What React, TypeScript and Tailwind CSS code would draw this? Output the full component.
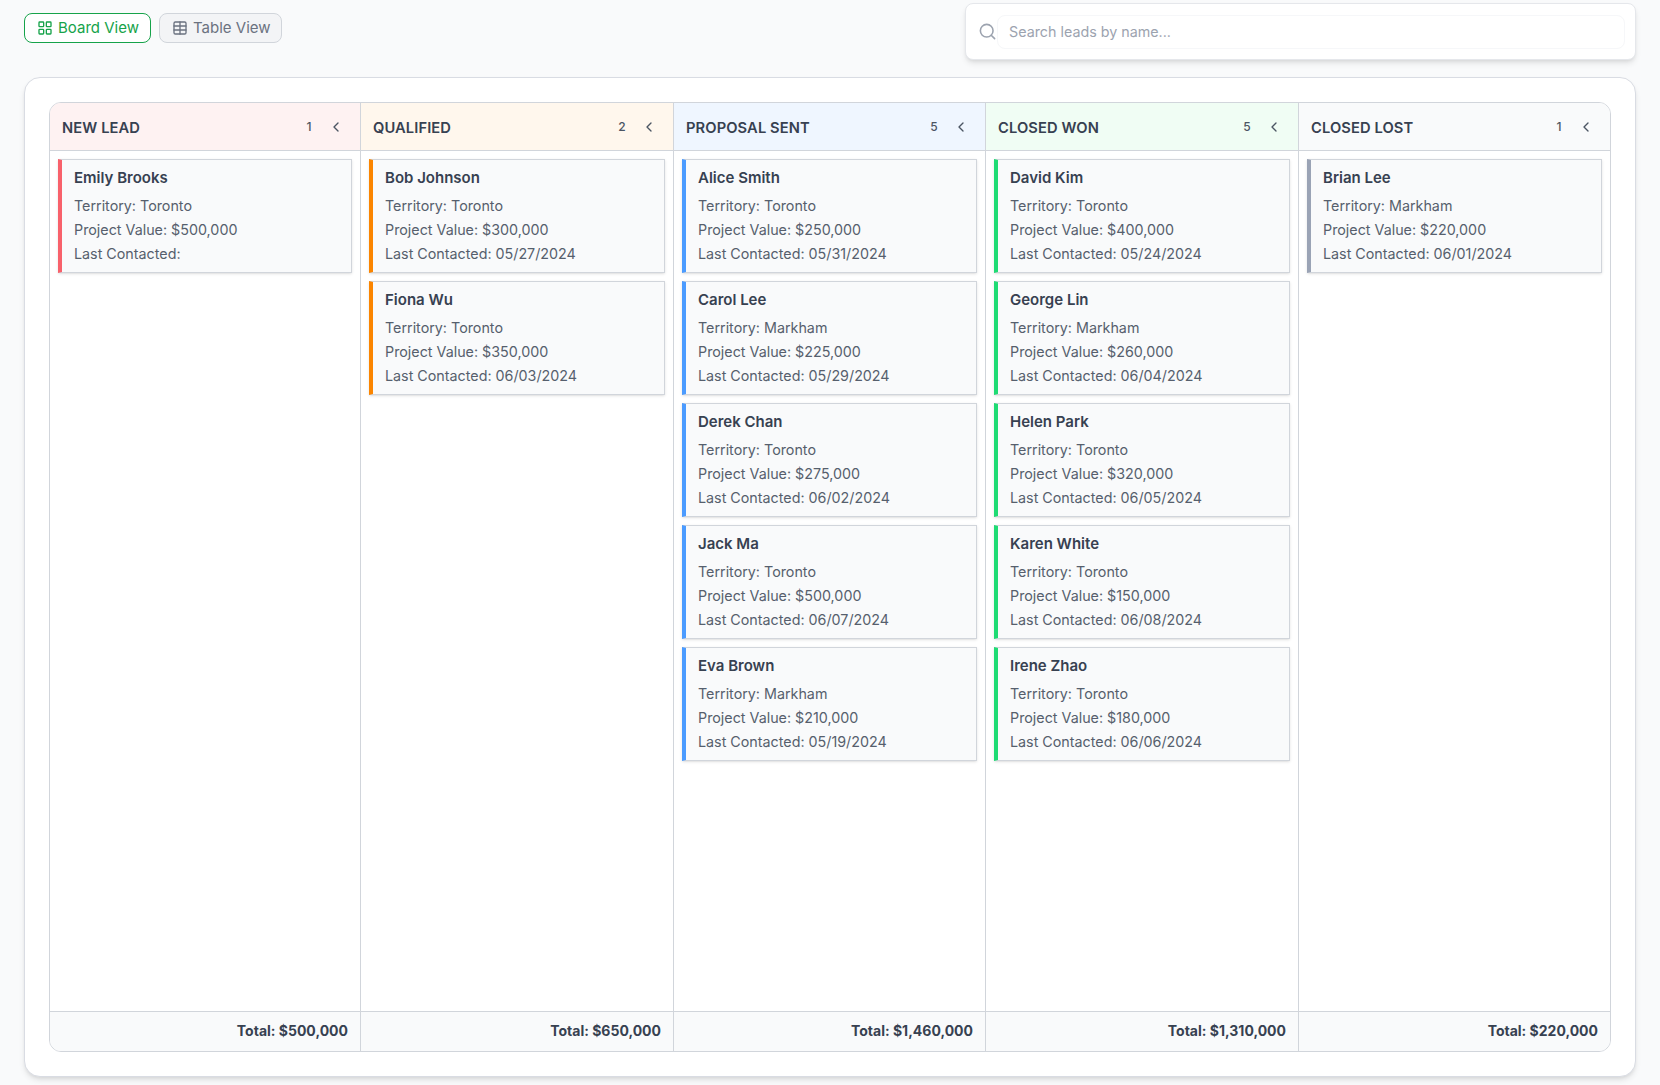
import { ChevronLeft, LayoutGrid, Search, Table } from "lucide-react";

type Lead = { name: string; territory: string; value: string; contacted: string };

const columns: {
  title: string;
  total: string;
  head: string;
  accent: string;
  leads: Lead[];
}[] = [
  {
    title: "New Lead",
    total: "$500,000",
    head: "bg-[#fef2f2]",
    accent: "border-l-[#f8616b]",
    leads: [{ name: "Emily Brooks", territory: "Toronto", value: "$500,000", contacted: "" }],
  },
  {
    title: "Qualified",
    total: "$650,000",
    head: "bg-[#fff7ed]",
    accent: "border-l-[#fb8500]",
    leads: [
      { name: "Bob Johnson", territory: "Toronto", value: "$300,000", contacted: "05/27/2024" },
      { name: "Fiona Wu", territory: "Toronto", value: "$350,000", contacted: "06/03/2024" },
    ],
  },
  {
    title: "Proposal Sent",
    total: "$1,460,000",
    head: "bg-[#eff6ff]",
    accent: "border-l-[#4b9bff]",
    leads: [
      { name: "Alice Smith", territory: "Toronto", value: "$250,000", contacted: "05/31/2024" },
      { name: "Carol Lee", territory: "Markham", value: "$225,000", contacted: "05/29/2024" },
      { name: "Derek Chan", territory: "Toronto", value: "$275,000", contacted: "06/02/2024" },
      { name: "Jack Ma", territory: "Toronto", value: "$500,000", contacted: "06/07/2024" },
      { name: "Eva Brown", territory: "Markham", value: "$210,000", contacted: "05/19/2024" },
    ],
  },
  {
    title: "Closed Won",
    total: "$1,310,000",
    head: "bg-[#f0fdf4]",
    accent: "border-l-[#1fdc74]",
    leads: [
      { name: "David Kim", territory: "Toronto", value: "$400,000", contacted: "05/24/2024" },
      { name: "George Lin", territory: "Markham", value: "$260,000", contacted: "06/04/2024" },
      { name: "Helen Park", territory: "Toronto", value: "$320,000", contacted: "06/05/2024" },
      { name: "Karen White", territory: "Toronto", value: "$150,000", contacted: "06/08/2024" },
      { name: "Irene Zhao", territory: "Toronto", value: "$180,000", contacted: "06/06/2024" },
    ],
  },
  {
    title: "Closed Lost",
    total: "$220,000",
    head: "bg-[#f9fafb]",
    accent: "border-l-[#9aa3b5]",
    leads: [{ name: "Brian Lee", territory: "Markham", value: "$220,000", contacted: "06/01/2024" }],
  },
];

function LeadCard({ lead, accent }: { lead: Lead; accent: string }) {
  return (
    <div className={`h-[114px] border border-l-4 border-[#d1d5db] bg-[#f9fafb] pl-3 pt-2 shadow-sm ${accent}`}>
      <p className="h-5 text-[15px] leading-5 font-semibold text-[#374151]">{lead.name}</p>
      <div className="mt-1.5 text-[14.3px] leading-6 text-[#565f6d]">
        <p>Territory: {lead.territory}</p>
        <p>Project Value: {lead.value}</p>
        <p>Last Contacted: {lead.contacted}</p>
      </div>
    </div>
  );
}

export default function App() {
  return (
    <div className="min-h-screen bg-[#f9fafb] px-6 pt-[3px] font-['Inter',sans-serif]">
      <div className="flex items-start justify-between">
        <div className="mt-[10px] flex gap-2">
          <button
            type="button"
            className="flex h-[30px] w-[127px] items-center gap-[5px] rounded-lg border border-[#16a34a] bg-white pl-3 text-[15px] text-[#16a34a]"
          >
            <LayoutGrid size={16} />
            Board View
          </button>
          <button
            type="button"
            className="flex h-[30px] w-[123px] items-center gap-[5px] rounded-lg border border-[#d1d5db] bg-[#f3f4f6] pl-3 text-[15px] text-[#6b7280]"
          >
            <Table size={16} />
            Table View
          </button>
        </div>
        <div className="flex h-[57px] w-[671px] items-center rounded-lg border border-[#e5e7eb] bg-white pl-3 pr-2.5 shadow-md">
          <Search size={19} className="shrink-0 text-[#9ca3af]" />
          <div className="flex h-[34px] flex-1 items-center rounded-lg border border-[#f6f7f9] bg-white px-[11px] text-[14.3px] text-[#9ca3af]">
            Search leads by name...
          </div>
        </div>
      </div>
      <div className="mt-[17px] h-[1000px] rounded-2xl border border-[#d9dce3] bg-white p-6 shadow-md">
        <div className="grid h-[950px] grid-cols-[311px_313px_312px_313px_1fr] overflow-hidden rounded-xl border border-[#d1d5db]">
          {columns.map((col) => (
            <div key={col.title} className="flex flex-col border-r border-[#d1d5db] last:border-r-0">
              <div className={`flex h-12 shrink-0 items-center border-b border-[#d1d5db] pl-3 ${col.head}`}>
                <span className="flex-1 pt-0.5 text-[14.7px] leading-5 font-semibold tracking-[0.1px] text-[#374151] uppercase">
                  {col.title}
                </span>
                <span className="w-4 text-center text-xs font-medium text-[#4b5563]">{col.leads.length}</span>
                <ChevronLeft size={16} className="mr-4 ml-[11px] text-[#4b5563]" />
              </div>
              <div className="flex flex-1 flex-col gap-2 p-2">
                {col.leads.map((lead) => (
                  <LeadCard key={lead.name} lead={lead} accent={col.accent} />
                ))}
              </div>
              <div className="flex h-10 shrink-0 items-center justify-end border-t border-[#d1d5db] bg-[#f9fafb] pr-3 pb-0.5 text-sm font-bold text-[#374151]">
                Total: {col.total}
              </div>
            </div>
          ))}
        </div>
      </div>
    </div>
  );
}
